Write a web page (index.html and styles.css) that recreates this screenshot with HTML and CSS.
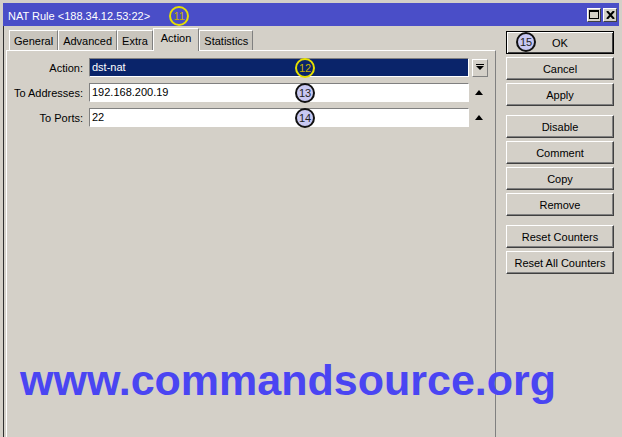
FILE: index.html
```html
<!DOCTYPE html>
<html lang="en">
<head>
    <meta charset="UTF-8">
    <title>NAT Rule</title>
    <link rel="stylesheet" href="styles.css">
</head>
<body>
    <div class="window">
        <!-- заголовок окна -->
        <div class="titlebar">
            <span class="title">NAT Rule &lt;188.34.12.53:22&gt;</span>
            <span class="marker marker-yellow marker-title">11</span>
            <div class="title-btns">
                <div class="title-btn">
                    <svg width="10" height="9" viewBox="0 0 10 9"><rect x="0.5" y="0.5" width="9" height="8" fill="none" stroke="#000"/><rect x="0" y="0" width="10" height="2" fill="#000"/></svg>
                </div>
                <div class="title-btn">
                    <svg width="9" height="8" viewBox="0 0 9 8"><path d="M1 0 L8 8 M8 0 L1 8" stroke="#000" stroke-width="2" fill="none"/></svg>
                </div>
            </div>
        </div>

        <div class="body">
            <div class="left">
                <div class="tabs">
                    <div class="tab">General</div>
                    <div class="tab">Advanced</div>
                    <div class="tab">Extra</div>
                    <div class="tab active">Action</div>
                    <div class="tab">Statistics</div>
                </div>
                <div class="panel">
                    <div class="row">
                        <label class="label">Action:</label>
                        <div class="field selected">dst-nat
                            <span class="marker marker-yellow">12</span>
                        </div>
                        <div class="drop-btn">
                            <svg width="8" height="7" viewBox="0 0 8 7"><rect x="0" y="0" width="8" height="1" fill="#000"/><path d="M0 2 H8 L4 6 Z" fill="#000"/></svg>
                        </div>
                    </div>
                    <div class="row">
                        <label class="label">To Addresses:</label>
                        <div class="field">192.168.200.19
                            <span class="marker marker-blue">13</span>
                        </div>
                        <div class="arrow-up"></div>
                    </div>
                    <div class="row">
                        <label class="label">To Ports:</label>
                        <div class="field">22
                            <span class="marker marker-blue">14</span>
                        </div>
                        <div class="arrow-up"></div>
                    </div>
                </div>
            </div>

            <div class="buttons">
                <button class="btn default"><span class="marker marker-blue marker-ok">15</span>OK</button>
                <button class="btn">Cancel</button>
                <button class="btn">Apply</button>
                <button class="btn group">Disable</button>
                <button class="btn">Comment</button>
                <button class="btn">Copy</button>
                <button class="btn">Remove</button>
                <button class="btn group">Reset Counters</button>
                <button class="btn">Reset All Counters</button>
            </div>
        </div>

        <div class="watermark">www.commandsource.org</div>
    </div>
</body>
</html>
```

FILE: styles.css
```css
body {
    margin: 0;
    background: #d4d0c8;
    font: 11px "Liberation Sans", Arial, sans-serif;
    color: #000;
}

.window {
    position: relative;
    width: 622px;
    height: 437px;
    box-sizing: border-box;
    padding: 3px 3px 0 3px;
    overflow: hidden;
}

/* заголовок */
.titlebar {
    height: 23px;
    background: #4a4ec8;
    display: flex;
    align-items: center;
    padding-left: 5px;
    color: #fff;
}

.title {
    padding-top: 2px;
}

.title-btns {
    margin-left: auto;
    margin-right: 2px;
    display: flex;
    gap: 2px;
}

.title-btn {
    width: 14px;
    height: 14px;
    box-sizing: border-box;
    background: #d4d0c8;
    border: 1px solid;
    border-color: #fff #404040 #404040 #fff;
    display: flex;
    align-items: center;
    justify-content: center;
}

/* номера-метки */
.marker {
    position: absolute;
    width: 20px;
    height: 20px;
    box-sizing: border-box;
    border-radius: 50%;
    font-size: 11px;
    line-height: 16px;
    text-align: center;
}

.marker-yellow {
    border: 2px solid #e6e000;
    color: #c8b000;
}

.marker-blue {
    border: 2px solid #111;
    background: #c8c8f2;
    color: #222;
}

.marker-title {
    position: static;
    display: inline-block;
    margin-left: 19px;
    margin-top: 2px;
}

.marker-ok {
    left: 9px;
    top: 0;
}

/* основная часть */
.body {
    display: flex;
    height: 411px;
    border-left: 1px solid #303030;
}

.left {
    width: 492px;
    display: flex;
    flex-direction: column;
}

.tabs {
    display: flex;
    align-items: flex-end;
    height: 22px;
    padding: 2px 0 0 5px;
}

.tab {
    height: 20px;
    box-sizing: border-box;
    padding: 1px 4px 0;
    line-height: 18px;
    background: #c9c5bd;
    border-top: 1px solid #fff;
    border-left: 1px solid #fff;
    border-right: 1px solid #808080;
}

.tab.active {
    position: relative;
    z-index: 1;
    height: 23px;
    margin-bottom: -1px;
    padding: 0 7px 3px;
    background: #d4d0c8;
}

.panel {
    flex: 1;
    margin-left: 2px;
    box-sizing: border-box;
    border-top: 1px solid #fff;
    border-left: 1px solid #fff;
    border-right: 1px solid #808080;
    padding-top: 7px;
}

.row {
    display: flex;
    align-items: center;
    height: 19px;
    margin-bottom: 6px;
}

.label {
    width: 76px;
    text-align: right;
    margin-right: 6px;
}

.field {
    position: relative;
    width: 380px;
    height: 19px;
    box-sizing: border-box;
    background: #fff;
    border: 1px solid;
    border-color: #808080 #fff #fff #808080;
    padding-left: 2px;
    line-height: 17px;
}

.field.selected {
    background: #0a246a;
    color: #fff;
}

.field .marker {
    left: 205px;
    top: -1px;
}

.drop-btn {
    width: 16px;
    height: 18px;
    margin-left: 3px;
    box-sizing: border-box;
    border: 1px solid;
    border-color: #fff #808080 #808080 #fff;
    display: flex;
    align-items: center;
    justify-content: center;
}

.arrow-up {
    width: 0;
    height: 0;
    margin-left: 6px;
    border-left: 4px solid transparent;
    border-right: 4px solid transparent;
    border-bottom: 5px solid #000;
}

/* кнопки справа */
.buttons {
    width: 108px;
    margin-left: 10px;
    padding-top: 5px;
    display: flex;
    flex-direction: column;
    gap: 3px;
}

.btn {
    position: relative;
    height: 23px;
    box-sizing: border-box;
    background: #d4d0c8;
    font: inherit;
    color: #000;
    border: 1px solid;
    border-color: #fff #404040 #404040 #fff;
    box-shadow: inset -1px -1px #808080;
    padding: 0;
}

.btn.default {
    border: 1px solid #000;
    box-shadow: inset 1px 1px #fff, inset -1px -1px #404040;
}

.btn.group {
    margin-top: 6px;
}

/* водяной знак поверх окна */
.watermark {
    position: absolute;
    left: 20px;
    top: 359px;
    font: bold 43px/43px "Liberation Sans", Arial, sans-serif;
    color: #4a45f2;
    white-space: nowrap;
}
```
